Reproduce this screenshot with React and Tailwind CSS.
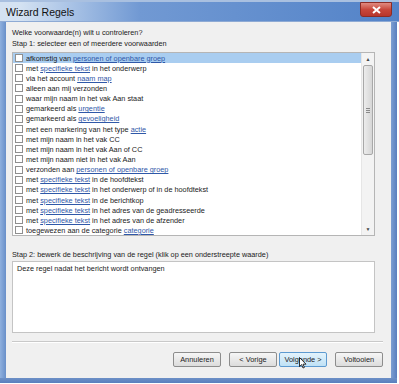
const rows = [
  [["afkomstig van "], ["personen of openbare groep", true]],
  [["met "], ["specifieke tekst", true], [" in het onderwerp"]],
  [["via het account "], ["naam map", true]],
  [["alleen aan mij verzonden"]],
  [["waar mijn naam in het vak Aan staat"]],
  [["gemarkeerd als "], ["urgentie", true]],
  [["gemarkeerd als "], ["gevoeligheid", true]],
  [["met een markering van het type "], ["actie", true]],
  [["met mijn naam in het vak CC"]],
  [["met mijn naam in het vak Aan of CC"]],
  [["met mijn naam niet in het vak Aan"]],
  [["verzonden aan "], ["personen of openbare groep", true]],
  [["met "], ["specifieke tekst", true], [" in de hoofdtekst"]],
  [["met "], ["specifieke tekst", true], [" in het onderwerp of in de hoofdtekst"]],
  [["met "], ["specifieke tekst", true], [" in de berichtkop"]],
  [["met "], ["specifieke tekst", true], [" in het adres van de geadresseerde"]],
  [["met "], ["specifieke tekst", true], [" in het adres van de afzender"]],
  [["toegewezen aan de categorie "], ["categorie", true]],
];

const Row = ({ parts, selected }) => (
  <div
    className={`flex items-center h-[10.15px] pl-[2px] ${
      selected ? "bg-[#a9cdf0]" : ""
    }`}
  >
    <div className="w-[8px] h-[8px] border border-[#8f8f8f] bg-white shrink-0" />
    <p className="ml-[3px] whitespace-nowrap">
      {parts.map(([text, link], i) =>
        link ? (
          <span key={i} className="text-[#2f58a8] underline">
            {text}
          </span>
        ) : (
          <span key={i}>{text}</span>
        )
      )}
    </p>
  </div>
);

const Button = ({ label, active }) => (
  <button
    className={`w-[48px] h-[15px] rounded-[2px] border text-[7.4px] leading-none ${
      active
        ? "border-[#5d9ad0] bg-linear-to-b from-[#e3f3fc] to-[#bfe1f6]"
        : "border-[#8d8d8d] bg-linear-to-b from-[#f6f6f6] to-[#dcdcdc]"
    }`}
  >
    {label}
  </button>
);

export default function App() {
  return (
    <div
      className="w-[399px] h-[384px] flex flex-col bg-white text-[#1b1b1b] text-[7.3px] leading-[11px]"
      style={{ fontFamily: '"Liberation Sans", Arial, sans-serif' }}
    >
      <div className="h-[22px] shrink-0 flex items-center justify-between bg-linear-to-r from-[#d4e2f2] from-5% via-[#7199d3] via-35% to-[#5383c8] border-t-2 border-[#a9c0e0] border-b border-b-[#8eaad4] pl-[6px] pr-[7px]">
        <span className="text-[10.5px] text-[#111] mt-[1px]">Wizard Regels</span>
        <div className="w-[32px] h-[15px] mb-[4px] rounded-b-[3px] bg-linear-to-b from-[#e08a80] via-[#c8473b] to-[#b8362c] border border-[#8d2c25] flex items-center justify-center">
          <svg width="9" height="8" viewBox="0 0 9 8">
            <path d="M1 1 L8 7 M8 1 L1 7" stroke="white" strokeWidth="2" />
          </svg>
        </div>
      </div>

      <div className="flex flex-1">
        <div className="w-[6px] bg-linear-to-r from-[#8fb0de] to-[#6a90c9]" />
        <div className="flex-1 flex flex-col bg-[#f0f0f0] pt-[5px] pl-[6px] pr-[8px]">
          <p>Welke voorwaarde(n) wilt u controleren?</p>
          <p>Stap 1: selecteer een of meerdere voorwaarden</p>

          <div className="mt-[3px] w-[363px] h-[184px] border border-[#b5b5b5] bg-white flex">
            <div className="flex-1 flex flex-col">
              {rows.map((parts, i) => (
                <Row key={i} parts={parts} selected={i === 0} />
              ))}
            </div>
            <div className="w-[13px] bg-[#f3f3f3] border-l border-[#e6e6e6] flex flex-col items-center">
              <span className="mt-[2px] text-[5px] leading-[8px] text-[#444]">▲</span>
              <div className="mt-[2px] w-[10px] h-[90px] rounded-[2px] border border-[#a8a8a8] bg-linear-to-r from-[#ececec] to-[#d6d6d6] flex items-center justify-center">
                <div className="flex flex-col gap-[1px]">
                  <div className="w-[4px] h-px bg-[#8a8a8a]" />
                  <div className="w-[4px] h-px bg-[#8a8a8a]" />
                  <div className="w-[4px] h-px bg-[#8a8a8a]" />
                </div>
              </div>
              <span className="mt-auto mb-[2px] text-[5px] leading-[8px] text-[#444]">▼</span>
            </div>
          </div>

          <p className="mt-[13px]">
            Stap 2: bewerk de beschrijving van de regel (klik op een onderstreepte waarde)
          </p>
          <div className="mt-[1px] w-[363px] h-[72px] border border-[#c4c4c4] bg-white px-[4px] pt-[1px]">
            Deze regel nadat het bericht wordt ontvangen
          </div>

          <div className="mt-[8px] h-[2px] border-t border-[#c9c9c9] border-b border-b-white" />

          <div className="mt-[9px] flex justify-end">
            <div className="flex items-center">
              <Button label="Annuleren" />
              <div className="w-[8px]" />
              <Button label="< Vorige" />
              <div className="w-[2px]" />
              <div className="relative">
                <Button label="Volgende >" active />
                <svg
                  className="absolute left-[20px] top-[5px]"
                  width="8"
                  height="12"
                  viewBox="0 0 8 12"
                >
                  <path
                    d="M0.5 0.5 L0.5 9.5 L2.6 7.6 L4 11 L5.4 10.4 L4 7.2 L7 7.2 Z"
                    fill="white"
                    stroke="black"
                    strokeWidth="0.8"
                  />
                </svg>
              </div>
              <div className="w-[8px]" />
              <Button label="Voltooien" />
            </div>
          </div>
        </div>
        <div className="w-[6px] bg-linear-to-r from-[#7d9fd2] to-[#5a7fbe]" />
        <div className="w-[2px] bg-white" />
      </div>
      <div className="h-[5px] shrink-0 bg-linear-to-b from-[#6d90c6] to-[#5a7fbe] mr-[2px]" />
      <div className="h-px bg-white" />
    </div>
  );
}
